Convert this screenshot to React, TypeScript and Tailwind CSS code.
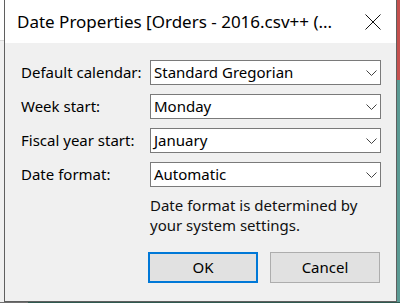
import React from "react";

const fields = [
  { label: "Default calendar:", value: "Standard Gregorian" },
  { label: "Week start:", value: "Monday" },
  { label: "Fiscal year start:", value: "January" },
  { label: "Date format:", value: "Automatic" },
];

const Chevron = () => (
  <svg width="11" height="6" viewBox="0 0 11 6" className="shrink-0">
    <path d="M0.5 0.5 L5.5 5.5 L10.5 0.5" fill="none" stroke="#444" strokeWidth="1" />
  </svg>
);

const App = () => {
  return (
    <div
      className="w-[400px] h-[303px] flex flex-col overflow-hidden bg-[#f0f0f0] text-black"
      style={{ fontFamily: '"Noto Sans", "Open Sans", sans-serif' }}
    >
      <div className="flex flex-1 min-h-0">
        {/* background strip on the left */}
        <div className="w-[4px] flex flex-col">
          <div className="h-[40px] bg-white" />
          <div className="h-[1px] bg-[#d9d9d9]" />
          <div className="flex-1 bg-[#f0f0f0]" />
        </div>

        {/* dialog window */}
        <div className="flex-1 flex flex-col border-x border-b border-[#5f5f5f]">
          <div className="h-[43px] bg-white flex items-center pl-[12px] pr-[15px] justify-between">
            <span className="text-[17px] leading-none">Date Properties [Orders - 2016.csv++ (...</span>
            <svg width="16" height="16" viewBox="0 0 16 16">
              <path d="M0.5 0.5 L15.5 15.5 M15.5 0.5 L0.5 15.5" stroke="#111" strokeWidth="1" />
            </svg>
          </div>

          <div className="flex-1 bg-[#f0f0f0] pl-[16px] pr-[15px] pt-[17px]">
            <div className="flex flex-col gap-[9px]">
              {fields.map((f) => (
                <div key={f.label} className="flex items-center">
                  <div className="w-[129px] text-[15px]">{f.label}</div>
                  <div className="flex-1 h-[25px] bg-white border border-[#7a7a7a] flex items-center justify-between pl-[3px] pr-[3px] text-[15px]">
                    <span>{f.value}</span>
                    <Chevron />
                  </div>
                </div>
              ))}
            </div>

            <div className="ml-[129px] mt-[8px] text-[15px] leading-[20px] text-[#111]">
              <div>Date format is determined by</div>
              <div>your system settings.</div>
            </div>

            <div className="ml-[127px] mt-[17px] flex gap-[12px]">
              <div className="w-[110px] h-[31px] bg-[#e1e1e1] border-2 border-[#0078d7] flex items-center justify-center text-[15px]">
                OK
              </div>
              <div className="w-[110px] h-[31px] bg-[#e1e1e1] border border-[#adadad] flex items-center justify-center text-[15px]">
                Cancel
              </div>
            </div>
          </div>
        </div>

        {/* background strip on the right */}
        <div className="w-[3px] flex flex-col">
          <div className="h-[80px] bg-[#c4504e]" />
          <div className="flex-1 bg-[#5b9a93]" />
        </div>
      </div>
      <div className="h-[1px] flex">
        <div className="w-[28px] bg-[#707070]" />
        <div className="flex-1 bg-[#2f5a50]" />
      </div>
    </div>
  );
};

export default App;
